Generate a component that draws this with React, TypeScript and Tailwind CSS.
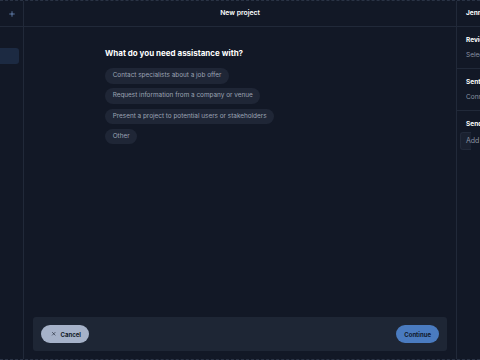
import React from "react";
import { Plus, X } from "lucide-react";

const options = [
  "Contact specialists about a job offer",
  "Request information from a company or venue",
  "Present a project to potential users or stakeholders",
  "Other",
];

export default function App() {
  return (
    <div className="flex h-[360px] w-[480px] overflow-hidden border-y border-dashed border-[#2a3345] bg-[#121826] font-['Inter',sans-serif] text-white">
      {/* sidebar */}
      <aside className="flex w-[24px] shrink-0 flex-col border-r border-[#212939]">
        <div className="flex h-[26px] items-center justify-center border-b border-[#212939]">
          <Plus size={8} strokeWidth={2} className="text-[#7ea4dc]" />
        </div>
        <div className="mt-[21px] h-[16px] w-[19px] rounded-r-[3px] bg-[#1c2a42]" />
      </aside>

      {/* main */}
      <main className="flex w-[433px] shrink-0 flex-col border-r border-[#212939]">
        <div className="flex h-[26px] items-center justify-center border-b border-[#212939] text-[6.8px] font-semibold">
          New project
        </div>
        <div className="flex-1">
          <div className="mx-auto flex w-[270px] flex-col pt-[21px]">
            <h2 className="text-[8px] font-bold leading-[10px]">
              What do you need assistance with?
            </h2>
            <div className="mt-[10px] flex flex-col items-start gap-[4.8px]">
              {options.map((o) => (
                <button
                  key={o}
                  className="flex h-[15.5px] items-center rounded-full bg-[#1f2636] px-[7.7px] text-[6.4px] text-[#9ca4b3]"
                >
                  {o}
                </button>
              ))}
            </div>
          </div>
        </div>
        <div className="mx-[9px] mb-[8px] flex h-[34px] items-center justify-between rounded-[3px] bg-[#1e2635] px-[8px]">
          <button className="flex h-[18px] items-center gap-[4px] rounded-full bg-[#a6b2c9] pl-[10px] pr-[8.5px] text-[6px] font-bold text-[#111827]">
            <X size={5.5} strokeWidth={2.5} />
            Cancel
          </button>
          <button className="flex h-[18px] items-center rounded-full bg-[#4a7bc0] px-[8px] text-[6px] font-bold text-[#0f172a]">
            Continue
          </button>
        </div>
      </main>

      {/* right panel */}
      <aside className="flex min-w-0 flex-1 flex-col overflow-hidden whitespace-nowrap">
        <div className="flex h-[26px] items-center border-b border-[#212939] px-[9px] text-[6.5px] font-bold">
          Jennifer Lee
        </div>
        <div className="h-[42px] border-b border-[#212939] px-[9px] pt-[9px]">
          <div className="text-[6.5px] font-bold leading-[8px]">Reviewers</div>
          <div className="mt-[7px] text-[6.5px] leading-[8px] text-[#8b93a3]">Select reviewers</div>
        </div>
        <div className="h-[42px] border-b border-[#212939] px-[9px] pt-[9px]">
          <div className="text-[6.5px] font-bold leading-[8px]">Sent to</div>
          <div className="mt-[7px] text-[6.5px] leading-[8px] text-[#8b93a3]">Connect a contact</div>
        </div>
        <div className="px-[9px] pt-[9px]">
          <div className="text-[6.5px] font-bold leading-[8px]">Send a message</div>
          <div className="-ml-[6px] mt-[4px] flex h-[18px] items-center rounded-l-[3px] border border-r-0 border-[#222a3a] bg-[#1a2130] px-[5px] text-[7px] text-[#8b93a3]">
            Add a note
          </div>
        </div>
      </aside>
    </div>
  );
}
